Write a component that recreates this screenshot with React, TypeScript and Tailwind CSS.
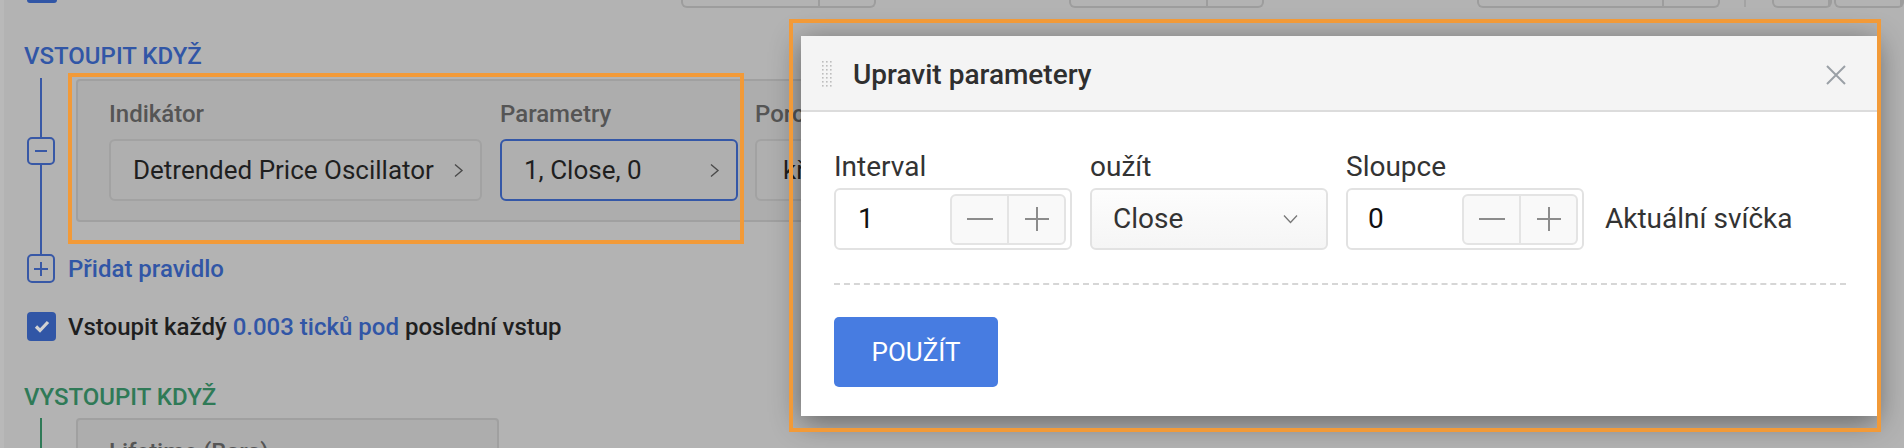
import React from 'react';

const BLUE = 'text-[#3156a6]';

function ChevronRight() {
  return (
    <svg width="12" height="15" viewBox="0 0 12 15" fill="none" stroke="#4a4a4a" strokeWidth="1.4">
      <path d="M2 1.5l7 6-7 6" />
    </svg>
  );
}

function Stepper() {
  return (
    <div className="ml-auto flex h-[51px] w-[116px] rounded-[6px] border-2 border-[#e4e4e4] bg-[#f9f9f9]">
      <div className="flex flex-1 items-center justify-center">
        <svg width="26" height="2" viewBox="0 0 26 2">
          <rect width="26" height="2" fill="#8c8c8c" />
        </svg>
      </div>
      <div className="flex flex-1 items-center justify-center border-l-2 border-[#e4e4e4]">
        <svg width="24" height="24" viewBox="0 0 24 24" stroke="#8c8c8c" strokeWidth="2">
          <path d="M0 12h24M12 0v24" />
        </svg>
      </div>
    </div>
  );
}

function TopBox({ ml, w, split }: { ml: string; w: string; split: string }) {
  return (
    <div className={`${ml} ${w} flex h-[8px] rounded-b-[6px] border-x-2 border-b-2 border-[#9d9d9d]`}>
      <div className={`${split} border-r-2 border-[#9d9d9d]`} />
    </div>
  );
}

export default function App() {
  return (
    <div className="relative h-[448px] w-[1904px] overflow-hidden bg-[#b3b3b3] font-['Roboto',sans-serif]">
      <div className="h-full border-l-[4px] border-[#b9b9b9]">
        {/* row of controls scrolled off the top */}
        <div className="flex h-[8px] items-start">
          <div className="ml-[23px] h-[3px] w-[30px] rounded-b-[3px] bg-[#3156a6]" />
          <TopBox ml="ml-[624px]" w="w-[198px]" split="w-[137px]" />
          <TopBox ml="ml-[193px]" w="w-[198px]" split="w-[137px]" />
          <TopBox ml="ml-[213px]" w="w-[246px]" split="w-[185px]" />
          <div className="ml-[24px] h-[7px] w-[2px] bg-[#a3a3a3]" />
          <TopBox ml="ml-[26px]" w="w-[60px]" split="w-[60px]" />
          <TopBox ml="ml-[2px]" w="w-[70px]" split="w-[70px]" />
        </div>

        <div className="pl-[20px]">
          <div className={`mt-[34px] text-[24px] font-medium leading-[28px] ${BLUE}`}>VSTOUPIT KDYŽ</div>

          {/* rule row */}
          <div className="mt-[8px] flex">
            <div className="ml-[3px] flex w-[28px] flex-col items-center">
              <div className="h-[59px] w-[2px] bg-[#3858a6]" />
              <div className="flex h-[28px] w-[28px] items-center justify-center rounded-[5px] border-2 border-[#3858a6]">
                <div className="h-[2px] w-[12px] bg-[#3858a6]" />
              </div>
              <div className="w-[2px] flex-1 bg-[#3858a6]" />
            </div>
            <div className="mb-[32px] ml-[21px] mt-[1px] flex h-[143px] w-[1200px] gap-[18px] rounded-[4px] border-2 border-[#a0a0a0] bg-[#adadad] pl-[31px] pt-[19px]">
              <div className="w-[373px]">
                <div className="text-[24px] font-medium leading-[28px] text-[#555]">Indikátor</div>
                <div className="mt-[11px] flex h-[62px] items-center justify-between rounded-[6px] border-2 border-[#a2a2a2] bg-[#afafaf] pl-[22px] pr-[15px] text-[26px] text-[#1f1f1f]">
                  <span>Detrended Price Oscillator</span>
                  <ChevronRight />
                </div>
              </div>
              <div className="w-[238px]">
                <div className="text-[24px] font-medium leading-[28px] text-[#555]">Parametry</div>
                <div className="mt-[11px] flex h-[62px] items-center justify-between rounded-[6px] border-2 border-[#3457a7] bg-[#afafaf] pl-[22px] pr-[15px] text-[26px] text-[#1f1f1f]">
                  <span>1, Close, 0</span>
                  <ChevronRight />
                </div>
              </div>
              <div className="ml-[-1px] w-[300px]">
                <div className="text-[24px] font-medium leading-[28px] text-[#555]">Porovnání</div>
                <div className="mt-[11px] flex h-[62px] items-center rounded-[6px] border-2 border-[#a2a2a2] bg-[#afafaf] pl-[26px] text-[26px] text-[#1f1f1f]">
                  kříží nad
                </div>
              </div>
            </div>
          </div>

          {/* add rule */}
          <div className="flex items-center">
            <div className="ml-[3px] flex h-[29px] w-[28px] items-center justify-center rounded-[5px] border-2 border-[#3858a6]">
              <svg width="14" height="14" viewBox="0 0 14 14" stroke="#3858a6" strokeWidth="2">
                <path d="M0 7h14M7 0v14" />
              </svg>
            </div>
            <span className={`ml-[13px] text-[24px] font-medium leading-[28px] ${BLUE}`}>Přidat pravidlo</span>
          </div>

          {/* repeat entry */}
          <div className="mt-[29px] flex items-center">
            <div className="ml-[3px] flex h-[29px] w-[29px] items-center justify-center rounded-[4px] bg-[#3156a6]">
              <svg width="16" height="13" viewBox="0 0 16 13" fill="none" stroke="#d2d2d2" strokeWidth="3.2">
                <path d="M2 6.5l4 4 8-8.5" />
              </svg>
            </div>
            <span className="ml-[12px] text-[24px] font-medium leading-[28px] text-[#1f1f1f]">
              Vstoupit každý <span className={BLUE}>0.003 ticků pod</span> poslední vstup
            </span>
          </div>

          <div className="mt-[42px] text-[24px] font-medium leading-[28px] text-[#2f7a57]">VYSTOUPIT KDYŽ</div>

          <div className="mt-[7px] flex">
            <div className="ml-[3px] flex w-[28px] justify-center">
              <div className="h-[40px] w-[2px] bg-[#2f7a57]" />
            </div>
            <div className="ml-[21px] h-[60px] w-[423px] rounded-[4px] border-2 border-[#a0a0a0] bg-[#adadad] pl-[31px] pt-[18px]">
              <div className="text-[24px] font-medium leading-[28px] text-[#555]">Lifetime (Bars)</div>
            </div>
          </div>
        </div>
      </div>

      {/* dialog */}
      <div className="absolute left-[801px] top-[36px] h-[380px] w-[1076px] bg-white shadow-[0_6px_28px_rgba(0,0,0,0.45)]">
        <div className="flex h-[76px] items-center border-b-2 border-[#dcdcdc] bg-[#f4f4f4] pl-[21px] pr-[31px] pt-[3px]">
          <svg width="10" height="27" viewBox="0 0 10 27" fill="#bdbdbd">
            {[0, 1, 2, 3, 4, 5, 6].map((r) =>
              [0, 1, 2].map((c) => <rect key={`${r}-${c}`} x={c * 4} y={r * 4} width="1.6" height="1.6" />)
            )}
          </svg>
          <span className="ml-[21px] text-[28px] font-medium leading-[32px] text-[#2f2f2f]">Upravit parametery</span>
          <svg className="ml-auto" width="20" height="20" viewBox="0 0 20 20" stroke="#9aa0a6" strokeWidth="2">
            <path d="M1 1l18 18M19 1L1 19" />
          </svg>
        </div>

        <div className="pl-[33px] pr-[31px] pt-[39px]">
          <div className="flex items-end gap-[18px]">
            <div className="w-[238px]">
              <div className="text-[28px] leading-[32px] text-[#333]">Interval</div>
              <div className="mt-[5px] flex h-[62px] items-center rounded-[6px] border-2 border-[#e2e2e2] pl-[22px] pr-[4px] text-[28px] text-[#111]">
                1
                <Stepper />
              </div>
            </div>
            <div className="w-[238px]">
              <div className="text-[28px] leading-[32px] text-[#333]">oužít</div>
              <div className="mt-[5px] flex h-[62px] items-center justify-between rounded-[6px] border-2 border-[#e2e2e2] bg-gradient-to-b from-[#fdfdfd] to-[#f5f5f5] pl-[21px] pr-[28px] text-[28px] text-[#333]">
                <span>Close</span>
                <svg width="15" height="10" viewBox="0 0 15 10" fill="none" stroke="#777" strokeWidth="1.3">
                  <path d="M1 1.5l6.5 7 6.5-7" />
                </svg>
              </div>
            </div>
            <div className="w-[238px]">
              <div className="text-[28px] leading-[32px] text-[#333]">Sloupce</div>
              <div className="mt-[5px] flex h-[62px] items-center rounded-[6px] border-2 border-[#e2e2e2] pl-[20px] pr-[4px] text-[28px] text-[#111]">
                0
                <Stepper />
              </div>
            </div>
            <div className="ml-[3px] flex h-[62px] items-center text-[28px] text-[#333]">Aktuální svíčka</div>
          </div>

          <div className="mt-[33px] border-t-2 border-dashed border-[#d6d6d6]" />

          <button className="mt-[32px] flex h-[70px] w-[164px] items-center justify-center rounded-[5px] bg-[#477ce1] text-[26px] text-white">
            POUŽÍT
          </button>
        </div>
      </div>

      {/* highlight frames */}
      <div className="pointer-events-none absolute left-[68px] top-[73px] h-[171px] w-[676px] border-4 border-[#f29a38]" />
      <div className="pointer-events-none absolute left-[789px] top-[19px] h-[413px] w-[1092px] border-4 border-[#f29a38]" />
    </div>
  );
}
